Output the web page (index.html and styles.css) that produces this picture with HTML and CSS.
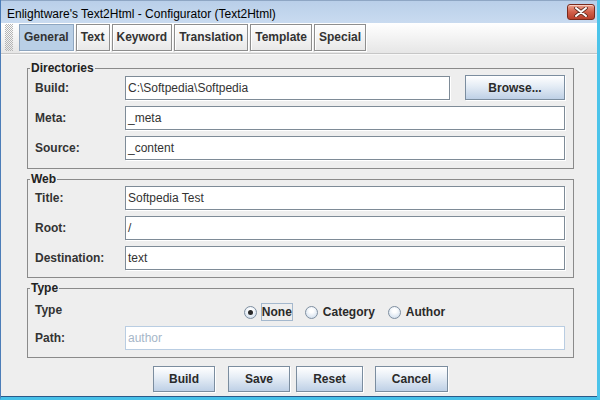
FILE: index.html
```html
<!DOCTYPE html>
<html>
<head>
<meta charset="utf-8">
<title>Enlightware's Text2Html - Configurator (Text2Html)</title>
<link rel="stylesheet" href="styles.css">
</head>
<body>
<div class="window">
  <div class="titlebar">
    <span class="title">Enlightware's Text2Html - Configurator (Text2Html)</span>
    <button class="close" aria-label="Close">
      <svg width="14" height="10" viewBox="0 0 14 10"><path d="M2 1 L12 9 M12 1 L2 9" stroke="#5a2a20" stroke-width="3.6" stroke-linecap="round"/><path d="M2 1 L12 9 M12 1 L2 9" stroke="#ffffff" stroke-width="2" stroke-linecap="round"/></svg>
    </button>
  </div>
  <div class="toolbar">
    <div class="grip"></div>
    <div class="tab selected">General</div>
    <div class="tab">Text</div>
    <div class="tab">Keyword</div>
    <div class="tab">Translation</div>
    <div class="tab">Template</div>
    <div class="tab">Special</div>
  </div>
  <div class="content">
    <fieldset class="group">
      <legend>Directories</legend>
      <div class="rows first-rows">
        <div class="row">
          <label class="lbl">Build:</label>
          <div class="field short">C:\Softpedia\Softpedia</div>
          <button class="btn browse">Browse...</button>
        </div>
        <div class="row">
          <label class="lbl">Meta:</label>
          <div class="field">_meta</div>
        </div>
        <div class="row">
          <label class="lbl">Source:</label>
          <div class="field">_content</div>
        </div>
      </div>
    </fieldset>
    <fieldset class="group">
      <legend>Web</legend>
      <div class="rows">
        <div class="row">
          <label class="lbl">Title:</label>
          <div class="field">Softpedia Test</div>
        </div>
        <div class="row">
          <label class="lbl">Root:</label>
          <div class="field">/</div>
        </div>
        <div class="row">
          <label class="lbl">Destination:</label>
          <div class="field">text</div>
        </div>
      </div>
    </fieldset>
    <fieldset class="group">
      <legend>Type</legend>
      <div class="rows type-rows">
        <div class="row type-row">
          <label class="lbl type-lbl">Type</label>
          <div class="radios">
            <span class="radio checked"><span class="dot"></span><span class="rtext focus">None</span></span>
            <span class="radio"><span class="dot"></span><span class="rtext">Category</span></span>
            <span class="radio"><span class="dot"></span><span class="rtext">Author</span></span>
          </div>
        </div>
        <div class="row">
          <label class="lbl">Path:</label>
          <div class="field disabled">author</div>
        </div>
      </div>
    </fieldset>
    <div class="actions">
      <button class="btn b-build">Build</button>
      <button class="btn b-save">Save</button>
      <button class="btn b-reset">Reset</button>
      <button class="btn b-cancel">Cancel</button>
    </div>
  </div>
</div>
</body>
</html>
```
FILE: styles.css
```css
* { box-sizing: border-box; }

body {
  margin: 0;
  background: #ffffff;
  font-family: "Liberation Sans", Arial, sans-serif;
  font-size: 12px;
  color: #333333;
}

.window {
  width: 600px;
  height: 400px;
  background: #eeeeee;
  border-left: 1px solid #4c7db8;
  border-right: 3px solid #4cc4ea;
  border-bottom: 3px solid #46c0e8;
  box-shadow: inset 0 -1px 0 #2a5a8a;
  display: flex;
  flex-direction: column;
}

/* title bar */
.titlebar {
  height: 23px;
  flex: none;
  display: flex;
  align-items: flex-start;
  border-top: 1px solid #8ea6c4;
  background: linear-gradient(#b9cfe9, #c9dbf0);
}
.title {
  margin-top: 3px;
  margin-left: 6px;
  line-height: 20px;
  font-size: 12px;
  color: #000000;
}
.close {
  margin: 3px 2px 0 auto;
  width: 28px;
  height: 16px;
  padding: 0;
  border: 1px solid #7a2a1c;
  border-radius: 3px;
  background: linear-gradient(#eca08c, #d2604a 50%, #b8402c);
  display: flex;
  align-items: center;
  justify-content: center;
  box-shadow: inset 0 1px 0 rgba(255,255,255,0.5);
}

/* toolbar */
.toolbar {
  height: 31px;
  flex: none;
  display: flex;
  align-items: flex-start;
  padding-top: 1px;
  background: linear-gradient(#ffffff, #e6e6e6);
  border-bottom: 1px solid #c6c6c6;
  box-shadow: 0 1px 0 #f8f8f8;
}
.grip {
  width: 8px;
  height: 27px;
  margin-left: 4px;
  margin-right: 6px;
  background: conic-gradient(#b4b4b4 25%, transparent 0 50%, #b4b4b4 0 75%, transparent 0) 0 0 / 2px 2px;
}
.tab {
  height: 27px;
  line-height: 25px;
  padding: 0 4px;
  margin-right: 2px;
  border: 1px solid #8e8e8e;
  box-shadow: 1px 1px 0 #ffffff, inset 1px 1px 0 #ffffff;
  font-weight: bold;
  color: #333333;
  white-space: nowrap;
}
.tab.selected {
  background: #b9cfe6;
  border-color: #8ea6c0;
  box-shadow: 1px 1px 0 #ffffff;
}

/* content */
.content {
  flex: 1;
  padding-left: 26px;
}
.group {
  width: 547px;
  margin: 7px 0 0 0;
  padding: 0;
  border: 1px solid #8a8a8a;
  min-width: 0;
}
.group + .group { margin-top: 3px; }
.group legend {
  margin-left: 2px;
  padding: 0 1px;
  font-weight: bold;
  line-height: 14px;
  color: #222222;
}
.rows {
  padding: 0 8px 7px 7px;
  display: flex;
  flex-direction: column;
  gap: 6px;
}
.first-rows { padding-bottom: 8px; }
.row {
  display: flex;
  align-items: center;
}
.lbl {
  width: 90px;
  flex: none;
  font-weight: bold;
  color: #333333;
}
.field {
  flex: 1;
  height: 24px;
  line-height: 22px;
  padding: 0 2px;
  background: #ffffff;
  border: 1px solid #7e8b97;
  box-shadow: 1px 1px 0 #ffffff;
  color: #333333;
  white-space: nowrap;
  overflow: hidden;
}
.field.short {
  flex: none;
  width: 325px;
  margin-right: 15px;
}
.field.disabled {
  border-color: #b9cde2;
  box-shadow: none;
  color: #a6b6c8;
}

/* buttons */
.btn {
  height: 25px;
  padding: 0;
  font-family: "Liberation Sans", Arial, sans-serif;
  font-size: 12px;
  font-weight: bold;
  color: #2a2a2a;
  background: linear-gradient(#ffffff, #e4ecf5 45%, #bed0e6);
  border: 1px solid #7b8d9f;
  box-shadow: 1px 1px 0 #ffffff;
}
.browse {
  width: 100px;
}

/* type row */
.type-rows { padding-top: 8px; gap: 5px; }
.type-row { align-items: flex-start; height: 18px; }
.type-lbl { line-height: 14px; }
.radios {
  flex: 1;
  display: flex;
  justify-content: center;
  gap: 12px;
  height: 18px;
  align-items: center;
}
.radio {
  display: flex;
  align-items: center;
  gap: 4px;
  font-weight: bold;
  color: #2a2a2a;
}
.dot {
  width: 13px;
  height: 13px;
  border-radius: 50%;
  border: 1px solid #7f8fa0;
  background: radial-gradient(circle at 50% 35%, #ffffff 20%, #c6d6e8 100%);
  display: flex;
  align-items: center;
  justify-content: center;
}
.radio.checked .dot::after {
  content: "";
  width: 5px;
  height: 5px;
  border-radius: 50%;
  background: #2a2a2a;
}
.rtext {
  border: 1px solid transparent;
  line-height: 16px;
  padding: 0 0;
}
.rtext.focus { border-color: #a4b8cd; }

/* actions */
.actions {
  width: 547px;
  display: flex;
  justify-content: center;
  margin-top: 8px;
}
.actions .btn { height: 26px; }
.b-build { width: 62px; margin-right: 13px; }
.b-save { width: 62px; margin-right: 6px; }
.b-reset { width: 67px; margin-right: 12px; }
.b-cancel { width: 73px; }
```
